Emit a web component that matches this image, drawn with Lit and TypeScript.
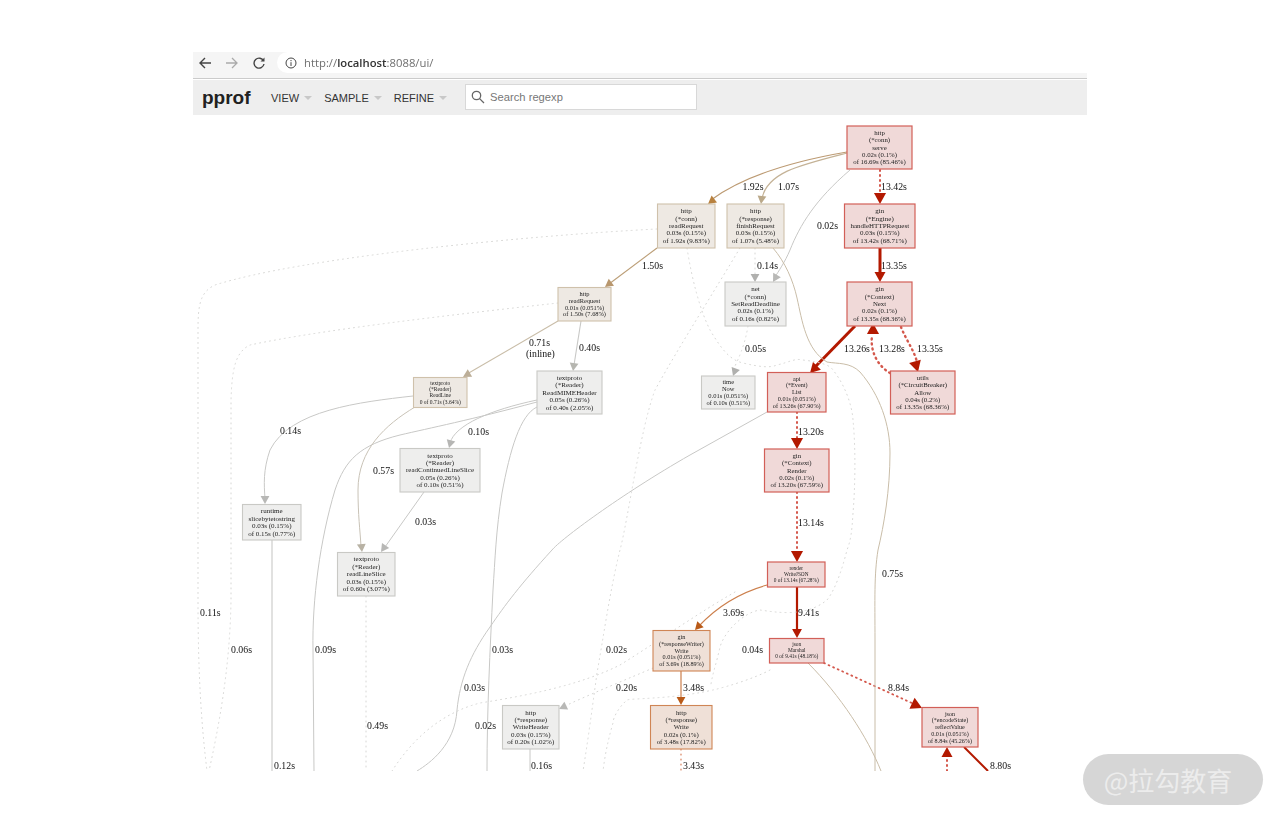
import { LitElement, html, css, svg } from "lit";
import { customElement } from "lit/decorators.js";

const OX = 193, OY = 115;
type Kind = "red" | "orange" | "tan" | "grey";
type N = { x: number; y: number; x2: number; y2: number; k: Kind; fs: number; lh: number; t: string[] };
const nodes: N[] = [
  { x: 847, y: 126, x2: 912, y2: 169, k: "red", fs: 6.8, lh: 7.4, t: ["http", "(*conn)", "serve", "0.02s (0.1%)", "of 16.69s (85.46%)"] },
  { x: 657.5, y: 204, x2: 715, y2: 248, k: "tan", fs: 7, lh: 7.4, t: ["http", "(*conn)", "readRequest", "0.03s (0.15%)", "of 1.92s (9.83%)"] },
  { x: 727, y: 204, x2: 784, y2: 248, k: "tan", fs: 7, lh: 7.4, t: ["http", "(*response)", "finishRequest", "0.03s (0.15%)", "of 1.07s (5.48%)"] },
  { x: 844.5, y: 204, x2: 915, y2: 248, k: "red", fs: 7, lh: 7.4, t: ["gin", "(*Engine)", "handleHTTPRequest", "0.03s (0.15%)", "of 13.42s (68.71%)"] },
  { x: 725, y: 282, x2: 786, y2: 326, k: "grey", fs: 7, lh: 7.4, t: ["net", "(*conn)", "SetReadDeadline", "0.02s (0.1%)", "of 0.16s (0.82%)"] },
  { x: 847, y: 282, x2: 912, y2: 326, k: "red", fs: 6.8, lh: 7.4, t: ["gin", "(*Context)", "Next", "0.02s (0.1%)", "of 13.35s (68.36%)"] },
  { x: 558, y: 287.5, x2: 611, y2: 321, k: "tan", fs: 6.4, lh: 6.8, t: ["http", "readRequest", "0.01s (0.051%)", "of 1.50s (7.68%)"] },
  { x: 413.5, y: 377.5, x2: 467, y2: 407.5, k: "tan", fs: 5.5, lh: 6.3, t: ["textproto", "(*Reader)", "ReadLine", "0 of 0.71s (3.64%)"] },
  { x: 537, y: 371, x2: 602, y2: 414, k: "grey", fs: 7.1, lh: 7.5, t: ["textproto", "(*Reader)", "ReadMIMEHeader", "0.05s (0.26%)", "of 0.40s (2.05%)"] },
  { x: 400, y: 448.5, x2: 480, y2: 492, k: "grey", fs: 7, lh: 7.4, t: ["textproto", "(*Reader)", "readContinuedLineSlice", "0.05s (0.26%)", "of 0.10s (0.51%)"] },
  { x: 701.5, y: 376, x2: 755, y2: 409, k: "grey", fs: 6.5, lh: 7, t: ["time", "Now", "0.01s (0.051%)", "of 0.10s (0.51%)"] },
  { x: 767.5, y: 372.5, x2: 826, y2: 412, k: "red", fs: 6.2, lh: 6.8, t: ["api", "(*Event)", "List", "0.01s (0.051%)", "of 13.26s (67.90%)"] },
  { x: 890.5, y: 371, x2: 955, y2: 414, k: "red", fs: 6.85, lh: 7.4, t: ["utils", "(*CircuitBreaker)", "Allow", "0.04s (0.2%)", "of 13.35s (68.36%)"] },
  { x: 764.5, y: 449, x2: 829, y2: 492, k: "red", fs: 6.8, lh: 7.4, t: ["gin", "(*Context)", "Render", "0.02s (0.1%)", "of 13.20s (67.59%)"] },
  { x: 242.5, y: 504.5, x2: 301, y2: 540, k: "grey", fs: 7, lh: 7.5, t: ["runtime", "slicebytetostring", "0.03s (0.15%)", "of 0.15s (0.77%)"] },
  { x: 337.5, y: 552.5, x2: 395, y2: 596, k: "grey", fs: 7, lh: 7.5, t: ["textproto", "(*Reader)", "readLineSlice", "0.03s (0.15%)", "of 0.60s (3.07%)"] },
  { x: 767.5, y: 562, x2: 825, y2: 587, k: "red", fs: 5.3, lh: 6, t: ["render", "WriteJSON", "0 of 13.14s (67.28%)"] },
  { x: 769.5, y: 638.5, x2: 824, y2: 663, k: "red", fs: 5.4, lh: 6, t: ["json", "Marshal", "0 of 9.41s (48.18%)"] },
  { x: 653, y: 630.5, x2: 710, y2: 671, k: "orange", fs: 6.2, lh: 6.8, t: ["gin", "(*responseWriter)", "Write", "0.01s (0.051%)", "of 3.69s (18.89%)"] },
  { x: 650.5, y: 705.5, x2: 712, y2: 749, k: "orange", fs: 6.8, lh: 7.4, t: ["http", "(*response)", "Write", "0.02s (0.1%)", "of 3.48s (17.82%)"] },
  { x: 502.5, y: 705.5, x2: 559, y2: 749, k: "grey", fs: 7, lh: 7.4, t: ["http", "(*response)", "WriteHeader", "0.03s (0.15%)", "of 0.20s (1.02%)"] },
  { x: 922, y: 707.5, x2: 978, y2: 747, k: "red", fs: 6.1, lh: 6.8, t: ["json", "(*encodeState)", "reflectValue", "0.01s (0.051%)", "of 8.84s (45.26%)"] },
];

type E = { d: string; c: string; w?: number; dot?: boolean };
const RED = "#b31900", RD = "#d4584c", TAN = "#c9bda8", BROWN = "#bc9a72", GREY = "#c8c8c6", DOT = "#d6d6d4", OR = "#cc7f4c";
const edges: E[] = [
  { d: "M847,152 C800,160 745,175 711,200", c: BROWN, w: 1.2 },
  { d: "M847,153 C800,165 768,172 762,198", c: "#c4b296", w: 1.2 },
  { d: "M850,170 C815,200 800,225 790,250 C785,262 778,272 775,277", c: GREY },
  { d: "M880,170 L880,196", c: RD, w: 2, dot: true },
  { d: "M880,248 L880,274", c: RED, w: 3 },
  { d: "M855,326 L816,366", c: RED, w: 3 },
  { d: "M890,373 C878,366 870,352 872,336", c: RD, w: 2.4, dot: true },
  { d: "M901,327 C906,340 914,350 917,362", c: RD, w: 2.4, dot: true },
  { d: "M797,412 L797,441", c: RD, w: 2, dot: true },
  { d: "M797,492 L797,554", c: RD, w: 2, dot: true },
  { d: "M797,587 L797,630", c: RED, w: 2.2 },
  { d: "M767,585 C735,594 712,612 699,626", c: OR, w: 1.2 },
  { d: "M681,671 L681,698", c: OR, w: 1.2 },
  { d: "M681,749 L681,771", c: "#d8805c", w: 1.2, dot: true },
  { d: "M824,663 L914,704", c: RD, w: 1.8, dot: true },
  { d: "M964,747 L988,771", c: RED, w: 2 },
  { d: "M947,771 L947,756", c: RD, w: 2, dot: true },
  { d: "M808,663 C840,695 868,738 881,771", c: TAN },
  { d: "M773,248 C785,262 793,280 797,298 C802,320 806,350 827,362 C838,364 850,362 860,372 C880,395 890,425 890,453 C890,490 884,525 878,550 C874,575 875,600 875,640 L875,771", c: TAN },
  { d: "M657,248 L609,284", c: "#bc9f78", w: 1.1 },
  { d: "M558,321 L467,374", c: TAN, w: 1.1 },
  { d: "M581,321 L574,365", c: GREY, w: 1.1 },
  { d: "M537,400 C490,410 455,425 450,443", c: GREY },
  { d: "M537,402 C470,420 430,428 400,435 C360,445 345,460 335,490 C320,540 312,600 313,650 L314,771", c: GREY },
  { d: "M537,407 C520,415 510,450 502,493 C496,530 495,560 493,590 C490,650 487,710 487,771", c: GREY },
  { d: "M413,396 C360,402 290,410 270,450 C263,470 264,485 265,498", c: GREY },
  { d: "M415,407 C385,425 358,450 358,490 C358,515 360,530 361,546", c: "#c8c2b6" },
  { d: "M424,492 L385,547", c: GREY },
  { d: "M272,540 L272,771", c: GREY, w: 1.1 },
  { d: "M767,412 L690,455 C620,495 560,540 552,550 C520,585 505,605 490,627 C470,655 460,680 457,710 C455,745 430,763 417,771", c: GREY },
  { d: "M366,596 L366,771", c: DOT, dot: true },
  { d: "M530,749 L530,771", c: GREY },
  { d: "M657,229 C520,236 300,258 215,285 C200,292 198,305 198,330 L198,600 C198,680 202,730 207,771", c: DOT, dot: true },
  { d: "M558,303 C450,315 320,330 250,345 C235,352 232,370 231,400 L231,600 C230,670 218,730 209,771", c: DOT, dot: true },
  { d: "M740,248 C715,290 680,345 655,390 C640,430 628,520 620,550 C610,590 603,640 597,673 C592,710 588,740 583,771", c: DOT, dot: true },
  { d: "M687,248 C692,280 700,310 710,330 C722,350 730,360 743,363 C760,367 770,368 777,365 C790,362 795,358 803,360 C820,362 830,365 833,370 C845,385 852,405 853,420 C856,450 855,490 853,513 C852,530 851,540 847,550 C842,570 835,590 827,600 C805,618 775,612 760,610 C745,612 725,630 720,647 C716,665 713,672 711,684", c: DOT, dot: true },
  { d: "M770,670 C755,678 730,686 713,690 C690,695 670,697 653,698 C640,699 630,699 627,700 C618,708 613,718 613,723 C608,740 605,755 603,771", c: DOT, dot: true },
  { d: "M653,668 C630,678 595,692 565,706", c: DOT, dot: true },
  { d: "M735,592 C700,612 660,640 620,665 C580,685 530,695 480,703 C445,712 415,735 392,771", c: DOT, dot: true },
  { d: "M755,248 L755,276", c: DOT, dot: true },
  { d: "M748,326 C745,345 738,360 734,368", c: DOT, dot: true },
];

const arrows: [number, number, number, number, string][] = [
  [708, 204, 142, 8, "#b8813f"],
  [761, 204, 97, 8, "#bba98a"],
  [773, 282, 120, 8, "#b8b8b6"],
  [880, 204, 90, 11, RED],
  [880, 282, 90, 10, RED],
  [810, 373, 134, 10, RED],
  [873, 323, -90, 11, RED],
  [918, 372, 74, 11, RED],
  [797, 449, 90, 11, RED],
  [797, 562, 90, 11, RED],
  [797, 638, 90, 9, RED],
  [695, 630, 133, 8, "#b95a18"],
  [681, 705, 90, 8, "#b95a18"],
  [922, 708, 25, 11, RED],
  [947, 747, -90, 10, RED],
  [605, 287, 143, 8, "#b8976e"],
  [463, 377, 150, 8, "#bcae98"],
  [573, 371, 98, 8, "#b6b6b0"],
  [449, 448, 105, 8, "#b6b6b4"],
  [265, 504, 90, 8, "#b8b8b6"],
  [362, 552, 85, 8, "#b8b2a4"],
  [381, 552, 125, 8, "#b8b8b6"],
  [559, 709, 155, 8, "#b8b8b6"],
  [755, 282, 90, 8, "#b0b0ae"],
  [733, 376, 110, 8, "#b0b0ae"],
];

const labels: [number, number, string][] = [
  [742.5, 189.5, "1.92s"], [778, 189.5, "1.07s"], [881, 189.5, "13.42s"], [817, 229, "0.02s"], [881, 268.5, "13.35s"],
  [757, 268.5, "0.14s"], [642, 268.5, "1.50s"], [529, 346, "0.71s"], [526, 357, "(inline)"], [579, 351, "0.40s"],
  [844, 351.5, "13.26s"], [879, 351.5, "13.28s"], [917, 351.5, "13.35s"], [745, 351.5, "0.05s"], [468, 435, "0.10s"],
  [798, 434.5, "13.20s"], [280, 434, "0.14s"], [373, 474, "0.57s"], [415, 525, "0.03s"], [798, 525.5, "13.14s"],
  [882, 577, "0.75s"], [200, 616, "0.11s"], [231, 653, "0.06s"], [315, 653, "0.09s"], [492, 653, "0.03s"],
  [606, 653, "0.02s"], [723, 616, "3.69s"], [798, 616, "9.41s"], [742, 653, "0.04s"], [464, 691, "0.03s"],
  [616, 691, "0.20s"], [683, 691, "3.48s"], [888, 691, "8.84s"], [475, 729, "0.02s"], [367, 729, "0.49s"],
  [274, 769, "0.12s"], [531, 769, "0.16s"], [683, 769, "3.43s"], [990, 769, "8.80s"],
];

function head(x: number, y: number, deg: number, s: number) {
  const a = (deg * Math.PI) / 180, w = s * 0.55;
  const bx = x - Math.cos(a) * s, by = y - Math.sin(a) * s;
  const px = -Math.sin(a) * w, py = Math.cos(a) * w;
  return `${x},${y} ${bx + px},${by + py} ${bx - px},${by - py}`;
}

@customElement("app-root")
export class AppRoot extends LitElement {
  static styles = css`
    :host { display: block; height: 822px; position: relative; background: #fff; overflow: hidden; }
    .page { padding-top: 52px; padding-left: 193px; width: 894px; }
    .bar { height: 26px; background: #f5f5f5; display: flex; align-items: flex-start; border-bottom: 1px solid #cbcbcb; box-sizing: content-box; }
    .nav { width: 84px; height: 21px; display: flex; align-items: center; gap: 13px; padding-left: 5px; box-sizing: border-box; }
    .nav svg { display: block; flex: none; }
    .addr { flex: 1; height: 21px; background: #fff; border-radius: 11px 0 0 11px; display: flex; align-items: center; gap: 7px; padding-left: 8px;
      font: 11.3px "Open Sans", "Liberation Sans", sans-serif; color: #6f6f6f; filter: blur(0.3px); }
    .addr b { font-weight: 600; color: #333; }
    .tools { margin-top: 1px; height: 35px; background: #eee; display: flex; align-items: center; font-family: "Liberation Sans", Arial, sans-serif; }
    .logo { font-size: 19px; font-weight: 700; color: #212121; margin-left: 9px; width: 69px; }
    .menu { font-size: 11px; color: #333; display: flex; align-items: center; gap: 5px; margin-right: 12px; }
    .caret { width: 0; height: 0; border: 4px solid transparent; border-top-color: #c8c8c8; border-bottom-width: 0; }
    .search { margin-left: 6px; width: 232px; height: 26px; margin-top: -1px; box-sizing: border-box; background: #fff; border: 1px solid #d8d8d8; display: flex; align-items: center; gap: 5px; padding-left: 5px; font-size: 11.2px; color: #777; }
    .graph { display: block; width: 894px; height: 656px; filter: blur(0.35px); }
    .graph text { font-family: "Liberation Serif", "Times New Roman", serif; }
    .lbl { font-size: 9.8px; fill: #111; }
    .ntxt { fill: #222; text-anchor: middle; }
    .edge { fill: none; }
    .dotted { stroke-dasharray: 1 4; stroke-linecap: round; }
    .n-red { fill: #f0d9d8; stroke: #d25f58; stroke-width: 1.2; }
    .n-orange { fill: #efe0d7; stroke: #cf8555; stroke-width: 1.1; }
    .n-tan { fill: #eee9e3; stroke: #cfc1ab; stroke-width: 1.1; }
    .n-grey { fill: #eeeeed; stroke: #c9c9c5; stroke-width: 1.1; }
    .mark { position: absolute; left: 1083px; top: 754px; width: 180px; height: 51px; border-radius: 26px; background: #d6d6d6; color: #ececec;
      display: flex; align-items: center; justify-content: center; box-sizing: border-box; padding-right: 10px; font: 400 26px "Noto Sans CJK SC", "Noto Sans", sans-serif; }
  `;

  render() {
    return html`
      <div class="page">
        <div class="bar">
          <div class="nav">
            <svg width="14" height="14" viewBox="0 0 14 14" fill="none" stroke="#444" stroke-width="1.4"><path d="M13 7H2M7 2L2 7l5 5"/></svg>
            <svg width="14" height="14" viewBox="0 0 14 14" fill="none" stroke="#aaa" stroke-width="1.3"><path d="M1 7h11M7 2l5 5-5 5"/></svg>
            <svg width="14" height="14" viewBox="0 0 14 14" fill="none" stroke="#444" stroke-width="1.4"><path d="M11.6 5A5 5 0 1 0 12 8"/><path d="M12.5 1.5V5.5H8.5" fill="#444" stroke="none"/></svg>
          </div>
          <div class="addr">
            <svg width="12" height="12" viewBox="0 0 12 12" fill="none" stroke="#444" stroke-width="1"><circle cx="6" cy="6" r="5"/><path d="M6 5.2V9M6 3v1.2"/></svg>
            <span>http://<b>localhost</b>:8088/ui/</span>
          </div>
        </div>
        <div class="tools">
          <div class="logo">pprof</div>
          <div class="menu">VIEW <i class="caret"></i></div>
          <div class="menu">SAMPLE <i class="caret"></i></div>
          <div class="menu">REFINE <i class="caret"></i></div>
          <div class="search">
            <svg width="14" height="14" viewBox="0 0 14 14" fill="none" stroke="#666" stroke-width="1.3"><circle cx="5.5" cy="5.5" r="4.2"/><path d="M8.6 8.6L13 13"/></svg>
            <span>Search regexp</span>
          </div>
        </div>
        <svg class="graph" viewBox="${OX} ${OY} 894 656">
          ${edges.map(
            (e) => svg`<path class="edge ${e.dot ? "dotted" : ""}" d=${e.d} stroke=${e.c} stroke-width=${e.w ?? 1}></path>`
          )}
          ${arrows.map(([x, y, a, s, c]) => svg`<polygon points=${head(x, y, a, s)} fill=${c}></polygon>`)}
          ${nodes.map((n) => {
            const cx = (n.x + n.x2) / 2;
            const total = n.t.length * n.lh;
            const top = (n.y + n.y2) / 2 - total / 2 + n.lh * 0.78;
            return svg`
              <rect class="n-${n.k}" x=${n.x} y=${n.y} width=${n.x2 - n.x} height=${n.y2 - n.y}></rect>
              ${n.t.map(
                (line, i) => svg`<text class="ntxt" x=${cx} y=${top + i * n.lh} font-size=${n.fs}>${line}</text>`
              )}`;
          })}
          ${labels.map(([x, y, t]) => svg`<text class="lbl" x=${x} y=${y}>${t}</text>`)}
        </svg>
      </div>
      <div class="mark">@拉勾教育</div>
    `;
  }
}
